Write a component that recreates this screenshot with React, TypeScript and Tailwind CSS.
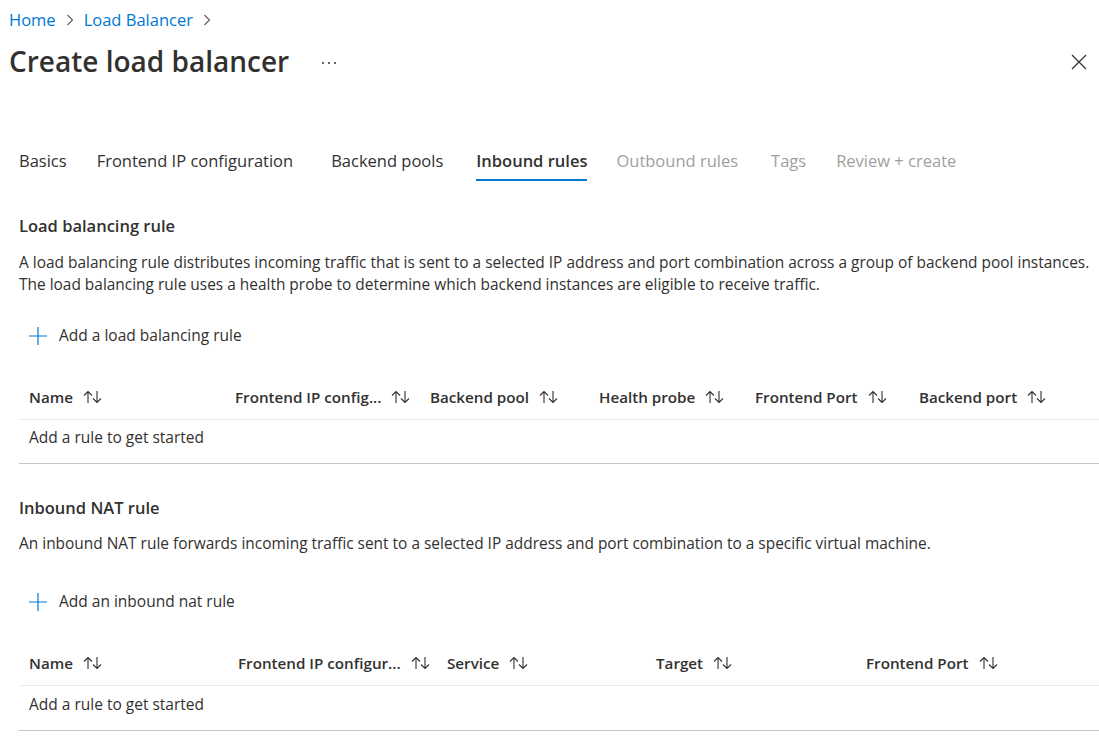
import React from 'react';

const FONT = { fontFamily: '"Open Sans", "Noto Sans", "Liberation Sans", sans-serif' };

// each tab keeps its own right gap, the portal spaces them unevenly
const tabs = [
  { label: 'Basics', state: 'done', gap: 'mr-[30px]' },
  { label: 'Frontend IP configuration', state: 'done', gap: 'mr-[38px]' },
  { label: 'Backend pools', state: 'done', gap: 'mr-[33px]' },
  { label: 'Inbound rules', state: 'active', gap: 'mr-[29px]' },
  { label: 'Outbound rules', state: 'disabled', gap: 'mr-[33px]' },
  { label: 'Tags', state: 'disabled', gap: 'mr-[30px]' },
  { label: 'Review + create', state: 'disabled', gap: 'mr-0' },
];

const SortIcon = () => (
  <svg width="22" height="16" viewBox="0 0 22 16" fill="none" stroke="#323130" strokeWidth="1.1" className="shrink-0">
    <path d="M6 14V2.5M2 6.5l4-4 4 4" />
    <path d="M15 2v11.5M11 9.5l4 4 4-4" />
  </svg>
);

const PlusIcon = () => (
  <svg width="18" height="18" viewBox="0 0 18 18" fill="none" stroke="#0078d4" strokeWidth="1.2">
    <path d="M9 0v18M0 9h18" />
  </svg>
);

const Chevron = () => (
  <svg width="8" height="12" viewBox="0 0 8 12" fill="none" stroke="#605e5c" strokeWidth="1.1">
    <path d="M1.5 1l5 5-5 5" />
  </svg>
);

interface Col {
  label: string;
  width: number;
}

const RuleTable = ({ cols, rowPad }: { cols: Col[]; rowPad: string }) => (
  <div className="w-full">
    <div className="flex h-[43px] items-center border-b border-[#edebe9] pb-[2px]">
      {cols.map((c, i) => (
        <div
          key={i}
          className="flex items-center gap-[9px] pl-[10px] text-[15.2px] font-semibold text-[#323130]"
          style={i === cols.length - 1 ? { flex: 1 } : { width: c.width }}
        >
          <span className="whitespace-nowrap">{c.label}</span>
          <SortIcon />
        </div>
      ))}
    </div>
    <div className={`border-b border-[#c8c6c4] pl-[10px] pb-[16px] text-[15.5px] leading-[20px] text-[#323130] ${rowPad}`}>
      Add a rule to get started
    </div>
  </div>
);

const lbCols: Col[] = [
  { label: 'Name', width: 206 },
  { label: 'Frontend IP config...', width: 195 },
  { label: 'Backend pool', width: 169 },
  { label: 'Health probe', width: 156 },
  { label: 'Frontend Port', width: 164 },
  { label: 'Backend port', width: 190 },
];

const natCols: Col[] = [
  { label: 'Name', width: 209 },
  { label: 'Frontend IP configur...', width: 209 },
  { label: 'Service', width: 209 },
  { label: 'Target', width: 210 },
  { label: 'Frontend Port', width: 243 },
];

const AddButton = ({ label }: { label: string }) => (
  <button className="flex h-[32px] items-center gap-[12px] pl-[10px] text-[15.5px] text-[#323130]">
    <PlusIcon />
    <span>{label}</span>
  </button>
);

export default function App() {
  return (
    <div className="min-h-screen w-full bg-white text-[#323130]" style={FONT}>
      {/* header */}
      <div className="px-[9px] pt-[9px]">
        <nav className="flex h-[22px] items-center gap-[10px] text-[16.5px] leading-[22px]">
          <span className="text-[#0078d4]">Home</span>
          <Chevron />
          <span className="text-[#0078d4]">Load Balancer</span>
          <Chevron />
        </nav>
        <div className="mt-[10px] flex h-[40px] items-center">
          <h1 className="text-[28px] font-semibold leading-[40px] text-[#323130]">Create load balancer</h1>
          <svg width="16" height="4" viewBox="0 0 16 4" className="ml-[32px] mt-[4px]" fill="#323130">
            <circle cx="2" cy="2" r="1" />
            <circle cx="8" cy="2" r="1" />
            <circle cx="14" cy="2" r="1" />
          </svg>
          <div className="flex-1" />
          <svg width="16" height="16" viewBox="0 0 16 16" className="mr-[3px] mt-[2px]" fill="none" stroke="#323130" strokeWidth="1.2">
            <path d="M1 1l14 14M15 1L1 15" />
          </svg>
        </div>
      </div>

      <div className="pl-[19px]">
        {/* tabs */}
        <div className="mt-[68px] flex items-end">
          {tabs.map((t) => (
            <div
              key={t.label}
              className={`${t.gap} border-b-2 pb-[6px] text-[16.5px] leading-[24px] ${
                t.state === 'active'
                  ? 'border-[#0078d4] font-semibold text-[#323130]'
                  : t.state === 'disabled'
                  ? 'border-transparent text-[#a19f9d]'
                  : 'border-transparent text-[#323130]'
              }`}
            >
              {t.label}
            </div>
          ))}
        </div>

        {/* load balancing rule */}
        <h2 className="mt-[33px] text-[16.5px] font-semibold leading-[24px]">Load balancing rule</h2>
        <p className="mt-[13px] text-[15.45px] leading-[22px]">
          A load balancing rule distributes incoming traffic that is sent to a selected IP address and port combination across a group of backend pool instances.
          <br />
          The load balancing rule uses a health probe to determine which backend instances are eligible to receive traffic.
        </p>
        <div className="mt-[25px]">
          <AddButton label="Add a load balancing rule" />
        </div>
        <div className="mt-[25px]">
          <RuleTable cols={lbCols} rowPad="pt-[7px]" />
        </div>

        {/* inbound nat rule */}
        <h2 className="mt-[32px] text-[16.5px] font-semibold leading-[24px]">Inbound NAT rule</h2>
        <p className="mt-[12px] text-[15.45px] leading-[22px]">
          An inbound NAT rule forwards incoming traffic sent to a selected IP address and port combination to a specific virtual machine.
        </p>
        <div className="mt-[32px]">
          <AddButton label="Add an inbound nat rule" />
        </div>
        <div className="mt-[25px]">
          <RuleTable cols={natCols} rowPad="pt-[8px]" />
        </div>
      </div>
    </div>
  );
}
